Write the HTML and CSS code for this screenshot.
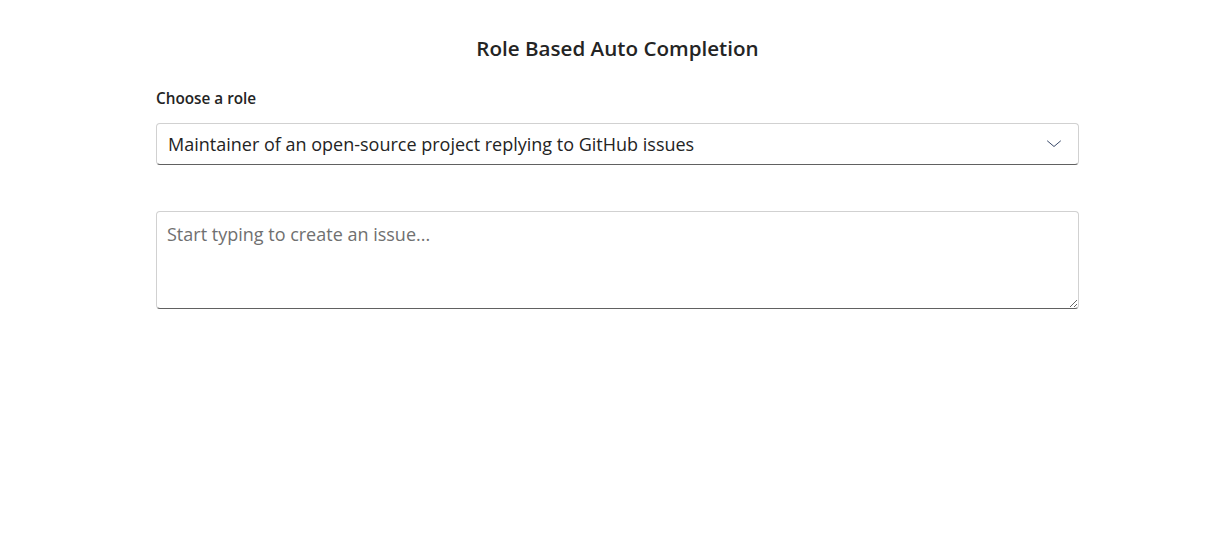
FILE: index.html
```html
<!DOCTYPE html>
<html>
<head>
<meta charset="utf-8">
<link rel="stylesheet" href="styles.css">
</head>
<body>
<main class="page">
  <h1 class="title">Role Based Auto Completion</h1>
  <label class="label">Choose a role</label>
  <div class="dropdown">
    <span class="dropdown-value">Maintainer of an open-source project replying to GitHub issues</span>
    <svg class="chevron" width="16" height="16" viewBox="0 0 16 16"><path d="M1.5 5 L8 10.5 L14.5 5" fill="none" stroke="#3a4a6a" stroke-width="1" stroke-linecap="round" stroke-linejoin="round"/></svg>
  </div>
  <div class="textarea-wrap">
    <textarea class="textarea" placeholder="Start typing to create an issue..."></textarea>
  </div>
</main>
</body>
</html>
```

FILE: styles.css
```css
* { box-sizing: border-box; }
html, body { margin: 0; padding: 0; background: #fff; }
body { font-family: "Open Sans", "Noto Sans", sans-serif; color: #242424; }
.page {
  width: 923px;
  margin-left: 156px;
  display: flex;
  flex-direction: column;
  padding-top: 34px;
}
.title {
  margin: 0;
  text-align: center;
  font-size: 20.6px;
  font-weight: 600;
  line-height: 28px;
}
.label {
  margin-top: 26px;
  font-size: 15.3px;
  font-weight: 600;
  line-height: 20px;
}
.dropdown {
  margin-top: 15px;
  height: 42px;
  border: 1px solid #d1d1d1;
  border-bottom-color: #616161;
  border-radius: 4px;
  display: flex;
  align-items: center;
  justify-content: space-between;
  padding: 0 16px 0 11px;
}
.dropdown-value { font-size: 18px; line-height: 22px; }
.textarea-wrap {
  margin-top: 46px;
  height: 98px;
  border: 1px solid #d1d1d1;
  border-bottom-color: #616161;
  border-radius: 4px;
  display: flex;
}
.textarea {
  flex: 1;
  border: none;
  outline: none;
  resize: vertical;
  font-family: inherit;
  font-size: 18px;
  line-height: 22px;
  padding: 11px 10px;
  color: #242424;
  background: transparent;
  border-radius: 4px;
}
.textarea::placeholder { color: #707070; }
```
